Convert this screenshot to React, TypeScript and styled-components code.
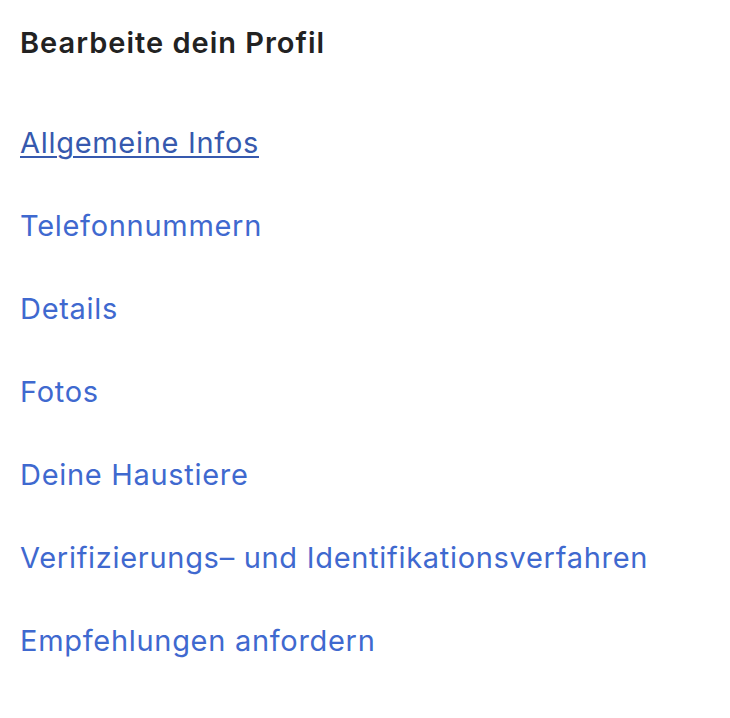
import React from 'react';
import styled, { createGlobalStyle } from 'styled-components';

const GlobalStyle = createGlobalStyle`
  html, body {
    margin: 0;
    padding: 0;
    background: #fff;
  }
  body {
    font-family: Inter, Lato, "Noto Sans", sans-serif;
    font-variant-ligatures: none;
  }
`;

const Container = styled.nav`
  padding: 23px 20px;
`;

const Title = styled.h2`
  margin: 0;
  font-size: 29px;
  line-height: 40px;
  font-weight: 600;
  letter-spacing: 1px;
  color: #222222;
`;

const LinkList = styled.ul`
  list-style: none;
  margin: 60px 0 0;
  padding: 0;
  display: flex;
  flex-direction: column;
  gap: 43px;
`;

const Item = styled.li`
  font-size: 29px;
  line-height: 40px;
  letter-spacing: 0.7px;
`;

const NavLink = styled.a<{ $active?: boolean }>`
  color: ${(p) => (p.$active ? '#3659ae' : '#3f69cf')};
  text-decoration: ${(p) => (p.$active ? 'underline' : 'none')};
  text-underline-offset: 3px;
  text-decoration-thickness: 2px;
  cursor: pointer;
`;

const links = [
  'Allgemeine Infos',
  'Telefonnummern',
  'Details',
  'Fotos',
  'Deine Haustiere',
  'Verifizierungs– und Identifikationsverfahren',
  'Empfehlungen anfordern',
];

export default function App() {
  return (
    <>
      <GlobalStyle />
      <Container>
        <Title>Bearbeite dein Profil</Title>
        <LinkList>
          {links.map((l, i) => (
            <Item key={l}>
              <NavLink $active={i === 0}>{l}</NavLink>
            </Item>
          ))}
        </LinkList>
      </Container>
    </>
  );
}
